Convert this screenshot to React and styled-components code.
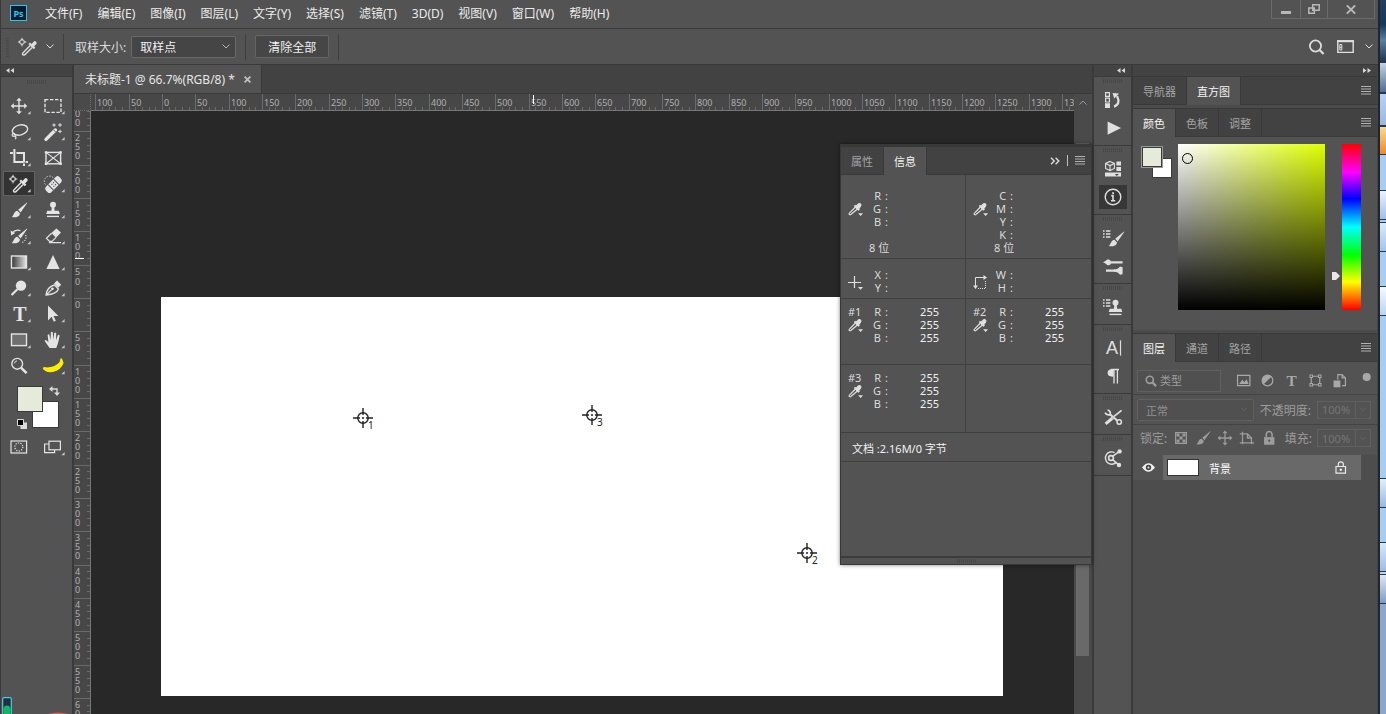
import React, { useState } from "react";
import styled, { createGlobalStyle } from "styled-components";

const GlobalStyle = createGlobalStyle`
  * {
    box-sizing: border-box;
  }

  body {
    margin: 0;
    overflow: hidden;
    background-color: #535353;
  }

  body, button, input, select {
    font-family: "Noto Sans", "Noto Sans CJK SC", sans-serif;
    font-size: 11px;
    color: #dcdcdc;
  }

  button {
    background: none;
    border: none;
    padding: 0;
  }

  svg {
    display: block;
    flex: none;
  }
`;

const Desktop = styled.div`
  display: flex;
  height: 100vh;
`;

const AppWindow = styled.div`
  flex: 1;
  min-width: 0;
  display: flex;
  flex-direction: column;
  background-color: #535353;
  border-left: 1px solid #3a3a3a;
`;

/* desktop visible at the right of the window */
const DesktopStrip = styled.div`
  width: 8px;
  display: flex;
  flex-direction: column;
  border-left: 2px solid #20262e;
  background-color: #8ba7c9;
`;

const DesktopTile = styled.div`
  height: ${(props) => props.$height}px;
  background: ${(props) => props.$background};
  border-bottom: ${(props) => (props.$framed ? "1px solid #26384f" : "none")};
  border-top: ${(props) => (props.$framed ? "1px solid #26384f" : "none")};
`;

const MenuBar = styled.header`
  height: 29px;
  flex: none;
  display: flex;
  align-items: flex-start;
  border-bottom: 1px solid #3a3a3a;
`;

const Logo = styled.div`
  width: 17px;
  height: 16px;
  margin: 5px 11px 0 9px;
  display: flex;
  align-items: center;
  justify-content: center;
  background-color: #001d33;
  border: 1px solid #2dc4e6;
  color: #2dc4e6;
  font-size: 9px;
  font-weight: bold;
`;

const MenuNav = styled.nav`
  display: flex;
  flex: 1;
`;

const MenuItem = styled.button`
  height: 26px;
  padding: 0 8px 0 7px;
  font-size: 12px;
  color: #ececec;
  white-space: nowrap;
`;

const WindowControls = styled.div`
  display: flex;
  height: 19px;
  margin-right: 3px;
  border: 1px solid #6a6a6a;
  border-top: none;
`;

const WindowButton = styled.button`
  width: ${(props) => props.$width}px;
  display: flex;
  align-items: center;
  justify-content: center;

  & + & {
    border-left: 1px solid #6a6a6a;
  }
`;

const OptionsBar = styled.div`
  height: 36px;
  flex: none;
  display: flex;
  align-items: center;
  border-bottom: 1px solid #3a3a3a;
  font-size: 12px;
  padding-left: 5px;
`;

const Grip = styled.span`
  width: ${(props) => (props.$vertical ? 3 : 19)}px;
  height: ${(props) => (props.$vertical ? 20 : 4)}px;
  background: repeating-linear-gradient(
    ${(props) => (props.$vertical ? "0deg" : "90deg")},
    #484848 0 1px,
    #535353 1px 2px
  );
`;

const Divider = styled.span`
  width: 1px;
  height: 26px;
  margin: 0 9px;
  background-color: #3f3f3f;
`;

const CurrentTool = styled.button`
  display: flex;
  align-items: center;
  gap: 8px;
  margin-left: 9px;
  color: #dcdcdc;
`;

const OptionLabel = styled.label`
  margin: 0 5px 0 2px;
`;

const SelectBox = styled.div`
  flex: ${(props) => (props.$grow ? 1 : "none")};
  width: ${(props) => props.$width};
  min-width: 0;
  height: 22px;
  display: grid;
  grid-template-columns: 1fr 18px;
  align-items: center;
  border: 1px solid ${(props) => (props.$dim ? "#606060" : "#686868")};
  border-radius: 2px;
  background-color: ${(props) => (props.$dim ? "#505050" : "#454545")};
`;

const Select = styled.select`
  grid-area: 1 / 1 / 2 / 3;
  appearance: none;
  height: 20px;
  width: 100%;
  padding: 2px 18px 0 8px;
  border: none;
  background: transparent;
  font-size: ${(props) => (props.$dim ? 11 : 12)}px;
  color: ${(props) => (props.$dim ? "#8f8f8f" : "#f0f0f0")};
  opacity: 1;
`;

const SelectArrow = styled.span`
  grid-area: 1 / 2;
  display: flex;
  justify-content: center;
  color: ${(props) => (props.$dim ? "#6c6c6c" : "#b4b4b4")};
  pointer-events: none;
`;

const ClearButton = styled.button`
  height: 23px;
  padding: 0 12px;
  font-size: 12px;
  color: #f0f0f0;
  background-color: #464646;
  border: 1px solid #646464;
  border-radius: 2px;
`;

const OptionsRight = styled.div`
  display: flex;
  align-items: center;
  gap: 11px;
  margin-left: auto;
  padding-right: 5px;
`;

const Main = styled.main`
  flex: 1;
  min-height: 0;
  display: flex;
`;

const CollapseBar = styled.div`
  height: 12px;
  flex: none;
  display: flex;
  align-items: center;
  justify-content: ${(props) => props.$justify};
  padding: 0 6px 0 5px;
  background-color: #434343;
  border-bottom: 1px solid #3a3a3a;
`;

const Toolbar = styled.aside`
  width: 73px;
  flex: none;
  display: flex;
  flex-direction: column;
  border-right: 2px solid #3a3a3a;
`;

const GripRow = styled.div`
  display: flex;
  justify-content: center;
  padding-top: 3px;
  height: 16px;
`;

const ToolGrid = styled.div`
  display: grid;
  grid-template-columns: 34px 34px;
  grid-auto-rows: 26px;
  padding-left: 1px;
`;

const ToolButton = styled.button`
  display: flex;
  align-items: center;
  justify-content: center;
  height: 25px;
  margin: 0 1px;
  color: #e4e4e4;
  background-color: ${(props) => (props.$active ? "#333333" : "transparent")};
  border: 1px solid ${(props) => (props.$active ? "#626262" : "transparent")};
`;

const ToolSwatches = styled.div`
  position: relative;
  height: 49px;
  margin-top: 6px;
`;

const Swatch = styled.button`
  position: absolute;
  left: ${(props) => props.$x}px;
  top: ${(props) => props.$y}px;
  width: ${(props) => props.$size}px;
  height: ${(props) => props.$size}px;
  background-color: ${(props) => props.$color};
  border: 1px solid #3a3a3a;
  outline: ${(props) => (props.$ring ? "1px solid #9a9a9a" : "none")};
`;

const SwatchIcon = styled.button`
  position: absolute;
  left: ${(props) => props.$x}px;
  top: ${(props) => props.$y}px;
`;

const Document = styled.section`
  position: relative;
  flex: 1;
  min-width: 0;
  display: flex;
  flex-direction: column;
`;

const DocumentTabs = styled.div`
  height: 29px;
  flex: none;
  display: flex;
  background-color: #424242;
  border-bottom: 1px solid #393939;
`;

const DocumentTab = styled.div`
  display: flex;
  align-items: center;
  gap: 9px;
  padding: 0 10px 0 11px;
  font-size: 12px;
  color: #e6e6e6;
  background-color: #535353;
  border-right: 1px solid #393939;
  white-space: nowrap;
`;

const Workspace = styled.div`
  flex: 1;
  min-height: 0;
  display: grid;
  grid-template-columns: 17px 1fr 18px;
  grid-template-rows: 17px 1fr;
  background-color: #282828;
`;

const RulerCorner = styled.div`
  background-color: #4a4a4a;
  border-right: 1px dotted #6e6e6e;
  border-bottom: 1px dotted #6e6e6e;
`;

const RulerBox = styled.div`
  overflow: hidden;
  background-color: #474747;
  border-bottom: ${(props) => (props.$vertical ? "none" : "1px solid #777777")};
  border-right: ${(props) => (props.$vertical ? "1px solid #777777" : "none")};
`;

const RulerDrawing = styled.svg`
  width: 100%;
  height: 100%;
  font-size: 9px;
  fill: #b0b0b0;
`;

const ScrollHead = styled.div`
  display: flex;
  align-items: center;
  justify-content: center;
  color: #989898;
  background-color: #4a4a4a;
`;

const ScrollTrack = styled.div`
  padding: 32px 3px 58px 2px;
  display: flex;
  background-color: #4a4a4a;
`;

const ScrollThumb = styled.div`
  flex: 1;
  background-color: #696969;
`;

const Pasteboard = styled.div`
  display: flex;
  padding: 186px 71px 18px 70px;
`;

const Artboard = styled.div`
  position: relative;
  flex: 1;
  background-color: #ffffff;
`;

const Sampler = styled.div`
  position: absolute;
  left: ${(props) => props.$x}px;
  top: ${(props) => props.$y}px;
`;

const InfoPanel = styled.section`
  position: absolute;
  top: 79px;
  right: 0;
  width: 252px;
  height: 421px;
  display: flex;
  flex-direction: column;
  background-color: #535353;
  border: 1px solid #383838;
  border-top-width: 3px;
  box-shadow: 0 0 4px rgba(0, 0, 0, 0.5);
`;

const TabBar = styled.div`
  height: 28px;
  flex: none;
  display: flex;
  background-color: #424242;
  border-bottom: 1px solid #3a3a3a;
`;

const Tab = styled.button`
  padding: 0 10px;
  height: ${(props) => (props.$active ? 28 : 27)}px;
  color: ${(props) => (props.$active ? "#f4f4f4" : "#a4a4a4")};
  background-color: ${(props) => (props.$active ? "#535353" : "#424242")};
  border-right: 1px solid #393939;
  white-space: nowrap;
`;

const TabBarEnd = styled.div`
  display: flex;
  align-items: center;
  gap: 7px;
  margin-left: auto;
  padding-right: 6px;
`;

const TabBarLine = styled.span`
  width: 1px;
  height: 11px;
  background-color: #c0c0c0;
`;

const InfoGrid = styled.div`
  display: grid;
  grid-template-columns: 1fr 1fr;
  grid-template-rows: 84px 40px 66px 68px;
`;

const InfoCell = styled.div`
  display: flex;
  padding: ${(props) => props.$top}px 0 0 7px;
  border-bottom: 1px solid #404040;

  &:nth-child(odd) {
    border-right: 1px solid #404040;
  }
`;

const InfoMark = styled.div`
  width: 17px;
  display: flex;
  flex-direction: column;
  justify-content: ${(props) => props.$justify};
  height: ${(props) => props.$height}px;
  line-height: 13px;
`;

const InfoTable = styled.table`
  border-spacing: 0;
  line-height: 13px;
  height: max-content;

  th {
    width: 16px;
    padding: 0;
    font-weight: normal;
    text-align: right;
  }

  td {
    padding: 0 0 0 4px;
    width: 8px;
  }

  td + td {
    width: 50px;
    color: #f2f2f2;
    text-align: right;
  }

  td[colspan] {
    padding-left: 4px;
    white-space: nowrap;
  }
`;

const DocumentSize = styled.div`
  height: 29px;
  padding: 2px 0 0 11px;
  display: flex;
  align-items: center;
  color: #f2f2f2;
  border-bottom: 1px solid #404040;
`;

const PanelFoot = styled.div`
  height: 8px;
  margin-top: auto;
  display: flex;
  align-items: center;
  justify-content: center;
  border-top: 2px solid #3c3c3c;
`;

const Dock = styled.aside`
  width: 41px;
  flex: none;
  display: flex;
  flex-direction: column;
  border-left: 2px solid #3a3a3a;
  border-right: 2px solid #3a3a3a;
`;

const DockGroup = styled.div`
  display: flex;
  flex-direction: column;
  align-items: center;
  padding: 2px 0 3px;
  border-bottom: 1px solid #3a3a3a;
`;

const DockGrip = styled(Grip)`
  margin-bottom: 3px;
`;

const DockButton = styled.button`
  width: 28px;
  height: 24px;
  margin: 2px 0;
  display: flex;
  align-items: center;
  justify-content: center;
  color: #e0e0e0;
  background-color: ${(props) => (props.$active ? "#373737" : "transparent")};
`;

const Panels = styled.aside`
  width: 245px;
  flex: none;
  display: flex;
  flex-direction: column;
  border-right: 1px solid #454545;
`;

const PanelGap = styled.div`
  height: 4px;
  flex: none;
  background-color: #4b4b4b;
  border-bottom: 1px solid #3a3a3a;
`;

const ColorPanel = styled.div`
  display: flex;
  height: 193px;
  padding: 7px 16px 0 9px;
`;

const ColorSwatches = styled.div`
  position: relative;
  width: 36px;
`;

const ColorField = styled.div`
  position: relative;
  flex: 1;
  height: 166px;
  background: linear-gradient(to top, #000000, transparent),
    linear-gradient(to right, #ffffff, #deff00);
`;

const ColorCursor = styled.span`
  position: absolute;
  left: 4px;
  top: 9px;
  width: 11px;
  height: 11px;
  border: 1px solid #000000;
  border-radius: 50%;
`;

const HueSlider = styled.input`
  appearance: none;
  writing-mode: vertical-lr;
  width: 29px;
  height: 166px;
  margin: 0 0 0 7px;
  background: linear-gradient(
      to bottom,
      #ff0000,
      #ff00ff 17%,
      #0000ff 33%,
      #00ffff 50%,
      #00ff00 67%,
      #ffff00 83%,
      #ff0000
    )
    right / 19px 100% no-repeat;

  &::-webkit-slider-runnable-track {
    width: 29px;
  }

  &::-webkit-slider-thumb {
    appearance: none;
    width: 8px;
    height: 8px;
    background-color: #e8e8e8;
    clip-path: polygon(0 0, 50% 0, 100% 50%, 50% 100%, 0 100%);
  }
`;

const LayersPanel = styled.div`
  flex: 1;
  display: flex;
  flex-direction: column;
  background-color: #4d4d4d;
`;

const LayerControls = styled.div`
  height: ${(props) => props.$height}px;
  display: flex;
  align-items: center;
  gap: ${(props) => props.$gap}px;
  padding: ${(props) => props.$padding};
  font-size: 12px;
  color: #9c9c9c;
  background-color: #535353;
  border-bottom: ${(props) => (props.$line ? "1px solid #434343" : "none")};
  white-space: nowrap;
`;

const FilterBox = styled.label`
  flex: 1;
  height: 22px;
  display: flex;
  align-items: center;
  gap: 3px;
  padding-left: 7px;
  border: 1px solid #606060;
  background-color: #505050;
`;

const FilterInput = styled.input`
  width: 60px;
  padding: 0;
  background: none;
  border: none;
  color: #9c9c9c;

  &::placeholder {
    color: #9c9c9c;
  }
`;

const FilterIcons = styled.div`
  display: flex;
  gap: 7px;
  padding-left: 14px;
  color: #a8a8a8;
`;

const AmountBox = styled.div`
  width: 54px;
  height: 18px;
  display: flex;
  align-items: center;
  border: 1px solid #606060;
`;

const AmountInput = styled.input`
  width: 38px;
  height: 16px;
  padding: 0 0 0 4px;
  background: none;
  border: none;
  border-right: 1px solid #606060;
  color: #757575;
`;

const AmountArrow = styled.span`
  flex: 1;
  display: flex;
  justify-content: center;
  color: #6c6c6c;
`;

const LockIcons = styled.div`
  flex: 1;
  display: flex;
  gap: 4px;
`;

const LayerRow = styled.div`
  height: 25px;
  display: flex;
`;

const EyeButton = styled.button`
  width: 30px;
  display: flex;
  align-items: center;
  justify-content: center;
  color: #f0f0f0;
  background-color: #535353;
`;

const LayerBody = styled.div`
  flex: 1;
  margin-right: 16px;
  padding: 0 14px 0 4px;
  display: flex;
  align-items: center;
  gap: 10px;
  background-color: #696969;
  color: #ffffff;
`;

const LayerThumb = styled.span`
  width: 32px;
  height: 17px;
  background-color: #ffffff;
  border: 1px solid #333333;
`;

const LayerLock = styled.span`
  margin-left: auto;
`;

/* small helper programs showing through at the bottom edge */
const CornerGadget = styled.div`
  position: absolute;
  left: 2px;
  bottom: 0;
  display: flex;
  align-items: flex-end;
  gap: 36px;
`;

const Icon = ({ size = 20, children, ...rest }) => (
  <svg
    width={size}
    height={size}
    viewBox="0 0 20 20"
    fill="none"
    stroke="currentColor"
    strokeWidth="1.4"
    {...rest}
  >
    {children}
  </svg>
);

const solid = { fill: "currentColor", stroke: "none" };

const eyedropper = (
  <>
    <path d="M13 7.6 15.6 4.8a1.7 1.7 0 0 1 2.6 2.4L15.4 10z" {...solid} />
    <path d="m11.2 6.2 5.4 5.2" strokeWidth="2.2" />
    <path d="M12.2 8.6 5.6 15.2q-2 1.8-.6 2.6t2.6-.8L14.2 10.6" />
  </>
);

const brush = (
  <>
    <path d="M18 2.4 9.2 9.8l2.4 2.6 6.6-9.4z" {...solid} />
    <path d="M8.4 10.8 11 13.4c-.4 3.4-4.6 4.4-8.4 3.6 2.4-1 2.2-6 5.8-6.2z" {...solid} />
  </>
);

const stamp = (
  <>
    <circle cx="10" cy="4.8" r="3" {...solid} />
    <path d="M8.8 7h2.4l.4 3.8h4.2l1 3.2H3.2l1-3.2h4.2z" {...solid} />
    <path d="M4 16.4h12" />
  </>
);

const moveArrows = (
  <>
    <path d="M10 3v14M3 10h14" />
    <path d="m10 1.8 2.8 3H7.2zM10 18.2l2.8-3H7.2zM1.8 10l3-2.8v5.6zM18.2 10l-3-2.8v5.6z" {...solid} />
  </>
);

const crosshairDropper = (
  <>
    <circle cx="4" cy="5" r="2.4" strokeWidth="1" />
    <path d="M4 .8v3M4 6.4v3M0 5h2.6M5.4 5h3" strokeWidth="1" />
    {eyedropper}
  </>
);

const listMarks = (
  <path d="M0 3h1.6M3 3h4.4M0 6h1.6M3 6h4.4M0 9h1.6M3 9h4.4" strokeWidth="1.3" />
);

const tools = [
  { name: "移动", icon: moveArrows },
  {
    name: "矩形选框",
    icon: <rect x="2" y="3.6" width="16" height="12.8" strokeDasharray="3.4 1.6" />,
  },
  {
    name: "套索",
    icon: (
      <>
        <ellipse cx="11" cy="8" rx="7.8" ry="5" transform="rotate(-14 11 8)" />
        <path d="M4.6 11.4c-2 .4-2 3 .2 3s1.4-3-.2-3M6 13.8q1.6 1.4.4 3.4" strokeWidth="1.2" />
      </>
    ),
  },
  {
    name: "魔棒",
    icon: (
      <>
        <path d="M3 17.4 12.4 8" strokeWidth="3.4" strokeLinecap="round" />
        <path d="m10.6 8 1.8 1.8" stroke="#535353" strokeWidth="1" />
        <path d="M11 1.4v3.4M9.3 3h3.4M17 1.2v3.6M15.2 3h3.6M17 7.8v3.4M15.3 9.4h3.4" strokeWidth="1" />
      </>
    ),
  },
  {
    name: "裁剪",
    icon: <path d="M5.4 1v13h9M1 5h3M7.4 5H15v9.6M15 15.6V18M16.6 14H19" strokeWidth="2" />,
  },
  {
    name: "图框",
    icon: (
      <>
        <rect x="3" y="4.4" width="14.6" height="11.4" />
        <path d="m3 4.4 14.6 11.4M17.6 4.4 3 15.8" strokeWidth="1.1" />
        <path d="M1.8 3.2h2.4v2.4H1.8zM16.4 3.2h2.4v2.4h-2.4zM1.8 14.6h2.4V17H1.8zM16.4 14.6h2.4V17h-2.4z" {...solid} />
      </>
    ),
  },
  { name: "颜色取样器", icon: crosshairDropper },
  {
    name: "污点修复",
    icon: (
      <>
        <path d="M2.4 10.4a5 5 0 1 1 8-6.4" strokeDasharray="1.2 1.6" strokeWidth="1" />
        <g transform="rotate(-45 10.5 10.6)">
          <rect x="1" y="6.8" width="19" height="7.6" rx="2.6" {...solid} />
          <path d="M6.6 6.8v7.6M14.4 6.8v7.6" stroke="#535353" strokeWidth="1" />
          <path d="M9 9.2h1.2M11.4 9.2h1.2M9 12h1.2M11.4 12h1.2" stroke="#535353" strokeWidth="1.2" />
        </g>
      </>
    ),
  },
  { name: "画笔", icon: brush },
  { name: "仿制图章", icon: stamp },
  {
    name: "历史记录画笔",
    icon: (
      <>
        {brush}
        <path d="M3 7.2q4-4.6 8.4-2.4" strokeWidth="1.2" />
        <path d="m1.6 4.6.6 5 4-2.6z" {...solid} />
        <path d="M16.6 9q1.8 5.6-4.6 8" strokeDasharray="1.2 1.4" strokeWidth="1.1" />
      </>
    ),
  },
  {
    name: "橡皮擦",
    icon: (
      <>
        <path d="m8.4 7 5-4.6 4.6 4-5 5.4z" {...solid} />
        <path d="m8.6 7.2-5.2 5 3.2 3.2h2.4l4-4M6 16.6h12" strokeWidth="1.2" />
      </>
    ),
  },
  {
    name: "渐变",
    icon: (
      <>
        <defs>
          <linearGradient id="toolGradient">
            <stop offset="0" stopColor="#333333" />
            <stop offset="1" stopColor="#e8e8e8" />
          </linearGradient>
        </defs>
        <rect x="2.5" y="4" width="15" height="12" fill="url(#toolGradient)" />
      </>
    ),
  },
  { name: "锐化", icon: <path d="m10 3 6.6 14H3.4z" {...solid} /> },
  {
    name: "减淡",
    icon: (
      <>
        <circle cx="12" cy="7.6" r="5.2" {...solid} />
        <path d="m2.6 17 5.8-5.8" strokeWidth="2.2" />
      </>
    ),
  },
  {
    name: "钢笔",
    icon: (
      <>
        <path d="M3 17q1-8 8.4-10l4 4Q13.8 16 3 17zM3.4 16.6l5.2-5" strokeWidth="1.3" />
        <circle cx="9.4" cy="10.8" r="1.4" {...solid} />
        <path d="m11 5.6 3-3 4.2 4.2-3 3z" {...solid} />
      </>
    ),
  },
  {
    name: "文字",
    icon: (
      <text x="11" y="16.6" textAnchor="middle" fontFamily="Liberation Serif, serif" fontWeight="bold" fontSize="20" {...solid}>
        T
      </text>
    ),
  },
  {
    name: "路径选择",
    icon: <path d="M5 1.6v14.8l3.6-3.6 2.2 5 2-1-2.2-4.8h4.8z" {...solid} />,
  },
  {
    name: "矩形",
    icon: <rect x="2.5" y="4" width="15" height="11.6" fill="#707070" />,
  },
  {
    name: "抓手",
    icon: (
      <path
        d="M6.6 18Q4 14.6 1.6 10.8c.2-1.4 1.8-1 3.8 1.4L4.6 5q1-1.6 1.8 0l1.2 5 .2-7.4q1-1.6 2 0l.4 7.2 1-6.6q1.2-1.4 2 0l-.2 7 1.8-5q1.4-1 1.8.4-1.4 8.6-3.4 12.4z"
        {...solid}
      />
    ),
  },
  {
    name: "缩放",
    icon: (
      <>
        <circle cx="8.2" cy="7.8" r="5.4" />
        <path d="M5.4 7.4A3 3 0 0 1 8 4.9" strokeWidth="1" />
        <path d="m12.2 11.8 5.4 5.4" strokeWidth="2.6" />
      </>
    ),
  },
  {
    name: "编辑工具栏",
    icon: (
      <path
        d="M-.4 12Q1 10.4 4 11.4q8.4-.2 12.6-5.4l.8-3.6h1.6l1.6 4.6Q18 14 10 16 1.6 17-.4 12z"
        fill="#ffee00"
        stroke="none"
      />
    ),
  },
];

const noFlyout = ["图框", "缩放"];

const dockGroups = [
  [
    {
      name: "历史记录",
      icon: (
        <>
          <path d="M2.6 2.6h3.8v3.8H2.6zM2.6 8.2h3.8V12H2.6z" strokeWidth="1.2" />
          <path d="M2 13.2h5V18H2z" {...solid} />
          <path d="M11 16.6q7-2.6 3-10.6" strokeWidth="2.2" />
          <path d="m9.6 3 6.4.6-4.8 5z" {...solid} />
        </>
      ),
    },
    { name: "动作", icon: <path d="M4.6 3.4 18 10 4.6 16.8z" {...solid} /> },
  ],
  [
    {
      name: "属性",
      icon: (
        <>
          <path d="m7 2.4 4.4 2v5L7 11.6 2.6 9.4v-5zM2.6 4.4 7 6.6l4.4-2.2M7 6.6v5" strokeWidth="1.1" />
          <path d="M13.4 2.4H18v4h-4.6zM13.4 8H18v4h-4.6zM2 13.6h16v4H2z" {...solid} />
          <path d="M11.8 15h4l-2 2z" fill="#444444" stroke="none" />
        </>
      ),
    },
    {
      name: "信息",
      active: true,
      icon: (
        <>
          <circle cx="10" cy="10" r="7.8" />
          <path d="M8.2 8.6H10v5M8 13.8h4.2" strokeWidth="1.6" />
          <path d="M9.2 5.2H11V7H9.2z" {...solid} />
        </>
      ),
    },
  ],
  [
    {
      name: "画笔设置",
      icon: (
        <>
          {listMarks}
          <g transform="translate(3 1)">{brush}</g>
        </>
      ),
    },
    {
      name: "画笔预设",
      icon: (
        <>
          <path d="M8 6.4h11.6M3 14.6h9" strokeWidth="2.2" />
          <path d="M0 6.2q2-.4 4.2-2.6Q8 3 8 6.4T4.2 9Q2 7 0 6.2z" {...solid} />
          <path d="M11 13.6q4 0 6-3l2.6.6v7l-2.6.6q-2-3-6-3z" {...solid} />
        </>
      ),
    },
  ],
  [
    {
      name: "仿制源",
      icon: (
        <>
          {listMarks}
          <g transform="translate(2.5 1)">{stamp}</g>
        </>
      ),
    },
  ],
  [
    {
      name: "字符",
      icon: (
        <>
          <text x="3" y="16" fontFamily="Liberation Sans, sans-serif" fontSize="18" {...solid}>
            A
          </text>
          <path d="M17.5 2.4v15.2" strokeWidth="1.2" />
        </>
      ),
    },
    {
      name: "段落",
      icon: (
        <>
          <path d="M10.6 3v7.6Q4.6 11 4.6 6.8T10.6 3z" {...solid} />
          <path d="M8 3.5h8M11 3v14.6M14.4 3v14.6" strokeWidth="1.3" />
        </>
      ),
    },
  ],
  [
    {
      name: "工具预设",
      icon: (
        <>
          <path d="m6.6 7 7.6 6.4" strokeWidth="2" />
          <circle cx="16.2" cy="15" r="2.2" strokeWidth="1.5" />
          <path d="M18.6 3.4 11 9.4" strokeWidth="1.8" />
          <path d="m9.6 11-7 5.8" strokeWidth="3" />
          <path d="M4.6 3q3.4 1 2.6 4.600Q3.600 8.600 2 5.600" strokeWidth="1.7" />
        </>
      ),
    },
  ],
  [
    {
      name: "共享",
      icon: (
        <>
          <path d="M11.6 4.6A6.2 6.2 0 1 0 13.4 14" />
          <circle cx="8" cy="10" r="2.4" strokeWidth="1.6" />
          <path d="M9.6 8.4 16 3.6M9.6 11.6l5.8 5" />
          <circle cx="16.6" cy="3.4" r="2.2" {...solid} />
          <circle cx="16" cy="17" r="2.2" {...solid} />
        </>
      ),
    },
  ],
];

const tiles = [
  { height: 62, background: "linear-gradient(#243f5d, #16385c 40%, #5a7f9f 65%, #1e3550)" },
  { height: 31, background: "linear-gradient(#c4d2e2, #4f6d90)", framed: true },
  { height: 33, background: "linear-gradient(#b8d2f2, #9ab8de)", framed: true },
  { height: 29, background: "linear-gradient(#f8dc8c, #f08828)", framed: true },
  { height: 35, background: "#a8cdf2" },
  { height: 30, background: "linear-gradient(#ecf4fc, #9cc0e8)", framed: true },
  { height: 2, background: "#a8cdf2" },
  { height: 30, background: "linear-gradient(#dceafa, #a0c4ec)", framed: true },
  { height: 34, background: "#a8cdf2" },
  { height: 30, background: "linear-gradient(#f6faff, #b8d4f2)", framed: true },
  { height: 162, background: "#a8cdf2" },
  { height: 30, background: "linear-gradient(#e4eefa, #96b8e0)", framed: true },
  { height: 34, background: "#a8cdf2" },
  { height: 30, background: "linear-gradient(#d8e8fc, #9cbce4)", framed: true },
  { height: 2, background: "#c0d4ec" },
  { height: 30, background: "linear-gradient(#dfe8f4, #7d9cc4)", framed: true },
];

const Chevron = ({ up, width = 8 }) => (
  <svg width={width} height="5" viewBox="0 0 8 5" fill="none" stroke="currentColor">
    <path d={up ? "M.5 4.5 4 1l3.5 3.5" : "M.5.5 4 4 7.5.5"} />
  </svg>
);

const DoubleArrow = ({ right }) => (
  <svg width="8" height="5" viewBox="0 0 8 5" fill="#d8d8d8">
    <path d={right ? "M0 0 3.5 2.5 0 5zM4.5 0 8 2.5 4.5 5z" : "M3.5 0 0 2.5 3.5 5zM8 0 4.5 2.5 8 5z"} />
  </svg>
);

const PanelMenu = () => (
  <svg width="10" height="9" viewBox="0 0 10 9" stroke="#b0b0b0">
    <path d="M0 .5h10M0 3h10M0 5.5h10M0 8h10" />
  </svg>
);

/* distance between labels: 50 document pixels at 66.7% zoom */
const STEP = 100 / 3;

const HorizontalRuler = ({ origin, marker }) => {
  const count = Math.floor((window.innerWidth - 420) / STEP) + 2;

  return (
    <RulerDrawing>
      {Array.from({ length: count * 5 }, (_, i) => {
        const x = Math.round(origin + ((i - 10) * STEP) / 5);
        return <path key={i} d={`M${x + 0.5} ${i % 5 ? 13 : 0}V17`} stroke="#6a6a6a" />;
      })}
      {Array.from({ length: count }, (_, i) => (
        <text key={i} x={Math.round(origin + (i - 2) * STEP) + 2} y="12">
          {Math.abs(i - 2) * 50}
        </text>
      ))}
      <path d={`M${marker} 1v9`} stroke="#ffffff" />
    </RulerDrawing>
  );
};

const VerticalRuler = ({ origin, marker }) => {
  const count = Math.floor((window.innerHeight - 80) / STEP);

  return (
    <RulerDrawing>
      {Array.from({ length: count * 5 }, (_, i) => {
        const y = Math.round(origin + ((i - 30) * STEP) / 5);
        return <path key={i} d={`M${i % 5 ? 13 : 0} ${y + 0.5}H17`} stroke="#6a6a6a" />;
      })}
      {Array.from({ length: count }, (_, i) => {
        const top = Math.round(origin + (i - 6) * STEP);
        const digits = String(Math.abs(i - 6) * 50).split("");
        const gap = digits.length === 2 ? 10 : 9;
        return digits.map((digit, n) => (
          <text key={`${i}-${n}`} x="1" y={top + 10 + n * gap}>
            {digit}
          </text>
        ));
      })}
      <path d={`M1 ${marker}h9`} stroke="#ffffff" />
    </RulerDrawing>
  );
};

const SmallDropper = () => (
  <svg width="15" height="15" viewBox="0 0 20 20" fill="none" stroke="#e0e0e0" strokeWidth="1.6">
    <g transform="translate(-2 -1)">
      <path d="M12 7.6 15.6 3.8a2 2 0 0 1 3 2.8L15.4 11z" fill="#e0e0e0" />
      <path d="m10.6 5.6 6.4 6.2" strokeWidth="2.4" />
      <path d="M11.6 8 4.6 15.2q-2 1.8-.6 2.6t2.6-.8L14.2 10.6" />
    </g>
    <path d="M13.5 15H20l-3.2 3.6z" fill="#e0e0e0" stroke="none" />
  </svg>
);

const Readout = ({ rows, depth }) => (
  <InfoTable>
    <tbody>
      {rows.map(([label, value]) => (
        <tr key={label}>
          <th scope="row">{label}</th>
          <td>:</td>
          {value && <td>{value}</td>}
        </tr>
      ))}
      {depth && rows.length === 3 && (
        <tr>
          <td colSpan="3">&nbsp;</td>
        </tr>
      )}
      {depth && (
        <tr>
          <td colSpan="3">{depth}</td>
        </tr>
      )}
    </tbody>
  </InfoTable>
);

const rgb = (value) => [
  ["R", value],
  ["G", value],
  ["B", value],
];

const SampleCell = ({ id }) => (
  <InfoCell $top={6}>
    <InfoMark $justify="flex-start" $height={40}>
      {id}
      <SmallDropper />
    </InfoMark>
    <Readout rows={rgb("255")} />
  </InfoCell>
);

const PanelTabs = ({ names, initial }) => {
  const [current, setCurrent] = useState(initial);

  return names.map((name) => (
    <Tab key={name} $active={name === current} onClick={() => setCurrent(name)}>
      {name}
    </Tab>
  ));
};

const samplers = [
  { id: 1, x: 192, y: 111 },
  { id: 3, x: 421, y: 108 },
  { id: 2, x: 636, y: 246 },
];

const menus = [
  "文件(F)",
  "编辑(E)",
  "图像(I)",
  "图层(L)",
  "文字(Y)",
  "选择(S)",
  "滤镜(T)",
  "3D(D)",
  "视图(V)",
  "窗口(W)",
  "帮助(H)",
];

const App = () => {
  const [tool, setTool] = useState("颜色取样器");
  const [hue, setHue] = useState(81);

  return (
    <Desktop>
      <GlobalStyle />
      <AppWindow>
        <MenuBar>
          <Logo>Ps</Logo>
          <MenuNav>
            {menus.map((menu) => (
              <MenuItem key={menu}>{menu}</MenuItem>
            ))}
          </MenuNav>
          <WindowControls>
            <WindowButton $width={28} aria-label="最小化">
              <svg width="10" height="9" viewBox="0 0 10 9" stroke="#b8b8b8" strokeWidth="3">
                <path d="M0 7.5h10" />
              </svg>
            </WindowButton>
            <WindowButton $width={27} aria-label="还原">
              <svg width="12" height="10" viewBox="0 0 12 10" fill="none" stroke="#b8b8b8" strokeWidth="1.5">
                <path d="M4.7.8h6.5v5.5H4.7zM.8 4h5.5v5.2H.8z" />
              </svg>
            </WindowButton>
            <WindowButton $width={47} aria-label="关闭">
              <svg width="10" height="9" viewBox="0 0 10 9" stroke="#b8b8b8" strokeWidth="2">
                <path d="m.8.4 8.4 8.2M9.2.4.8 8.6" />
              </svg>
            </WindowButton>
          </WindowControls>
        </MenuBar>

        <OptionsBar>
          <Grip $vertical />
          <CurrentTool aria-label="颜色取样器">
            <Icon>{crosshairDropper}</Icon>
            <Chevron />
          </CurrentTool>
          <Divider />
          <OptionLabel htmlFor="sample">取样大小:</OptionLabel>
          <SelectBox $width="105px">
            <Select id="sample">
              <option>取样点</option>
            </Select>
            <SelectArrow>
              <Chevron />
            </SelectArrow>
          </SelectBox>
          <Divider />
          <ClearButton>清除全部</ClearButton>
          <Divider />
          <OptionsRight>
            <Icon size={20}>
              <circle cx="9.5" cy="9" r="5.6" strokeWidth="1.8" />
              <path d="m13.6 13 4 4" strokeWidth="2.2" />
            </Icon>
            <svg width="17" height="13" viewBox="0 0 17 13" fill="none" stroke="#e0e0e0">
              <path d="M.8 1h15.4v11.5H.8z" strokeWidth="1.4" />
              <path d="M0 1.2h17" strokeWidth="2" />
              <path d="M2.8 4.5h2V10h-2zM2.8 7.2h2" />
            </svg>
            <Chevron />
          </OptionsRight>
        </OptionsBar>

        <Main>
          <Toolbar>
            <CollapseBar $justify="flex-start">
              <DoubleArrow />
            </CollapseBar>
            <GripRow>
              <Grip />
            </GripRow>
            <ToolGrid>
              {tools.map(({ name, icon }) => (
                <ToolButton
                  key={name}
                  aria-label={name}
                  $active={name === tool}
                  onClick={() => setTool(name)}
                >
                  <Icon overflow="visible">
                    {icon}
                    {!noFlyout.includes(name) && (
                      <path d="M21.6 15v3.2h-3.2z" fill="#c8c8c8" stroke="none" />
                    )}
                  </Icon>
                </ToolButton>
              ))}
            </ToolGrid>
            <ToolSwatches>
              <Swatch $x={31} $y={16} $size={27} $color="#ffffff" aria-label="背景色" />
              <Swatch $x={16} $y={1} $size={26} $color="#e6eadb" aria-label="前景色" />
              <SwatchIcon $x={48} $y={1} aria-label="切换颜色">
                <svg width="11" height="10" viewBox="0 0 11 10" fill="#dcdcdc">
                  <path d="M0 3 3.5 0v6zM8 10 5 6.5h6z" />
                  <path d="M3 3h5v4" fill="none" stroke="#dcdcdc" strokeWidth="1.4" />
                </svg>
              </SwatchIcon>
              <SwatchIcon $x={16} $y={34} aria-label="默认颜色">
                <svg width="10" height="10" viewBox="0 0 10 10">
                  <path d="M3.5 3.5H10V10H3.5z" fill="#dcdcdc" />
                  <path d="M.5.5h6v6h-6z" fill="#000000" stroke="#dcdcdc" />
                </svg>
              </SwatchIcon>
            </ToolSwatches>
            <ToolGrid>
              <ToolButton aria-label="快速蒙版">
                <Icon>
                  <rect x="2" y="4" width="15.6" height="12" strokeWidth="1.2" />
                  <circle cx="9.8" cy="10" r="4" strokeWidth="1.2" strokeDasharray="1.2 1.3" />
                </Icon>
              </ToolButton>
              <ToolButton aria-label="屏幕模式">
                <Icon overflow="visible">
                  <path d="M6 7H1.6v8.6h10V13" strokeWidth="1.2" />
                  <rect x="6" y="4.2" width="11.4" height="8.6" strokeWidth="1.2" />
                  <path d="M21.6 15v3.2h-3.2z" fill="#c8c8c8" stroke="none" />
                </Icon>
              </ToolButton>
            </ToolGrid>
          </Toolbar>

          <Document>
            <DocumentTabs>
              <DocumentTab>
                未标题-1 @ 66.7%(RGB/8) *
                <button aria-label="关闭文档">
                  <svg width="7" height="7" viewBox="0 0 7 7" stroke="#c0c0c0" strokeWidth="1.8">
                    <path d="m.6.6 5.8 5.8M6.4.6.6 6.4" />
                  </svg>
                </button>
              </DocumentTab>
            </DocumentTabs>
            <Workspace>
              <RulerCorner />
              <RulerBox>
                <HorizontalRuler origin={71} marker={442.5} />
              </RulerBox>
              <ScrollHead>
                <Chevron up />
              </ScrollHead>
              <RulerBox $vertical>
                <VerticalRuler origin={187} marker={147.5} />
              </RulerBox>
              <Pasteboard>
                <Artboard>
                  {samplers.map(({ id, x, y }) => (
                    <Sampler key={id} $x={x} $y={y}>
                      <svg width="24" height="24" viewBox="0 0 24 24" fill="none" stroke="#222222" strokeWidth="1.4">
                        <circle cx="10" cy="10" r="5.2" />
                        <path d="M10 0v7M10 13v7M0 10h7M13 10h7" />
                        <circle cx="10" cy="10" r="1" fill="#222222" stroke="none" />
                        <text x="15" y="21" fontSize="10" fill="#222222" stroke="none">
                          {id}
                        </text>
                      </svg>
                    </Sampler>
                  ))}
                </Artboard>
              </Pasteboard>
              <ScrollTrack>
                <ScrollThumb />
              </ScrollTrack>
            </Workspace>

            <InfoPanel>
              <TabBar>
                <PanelTabs names={["属性", "信息"]} initial="信息" />
                <TabBarEnd>
                  <svg width="10" height="8" viewBox="0 0 10 8" fill="none" stroke="#dcdcdc" strokeWidth="1.4">
                    <path d="m1 .8 3.2 3.2L1 7.2M5.6.8 8.8 4 5.6 7.2" />
                  </svg>
                  <TabBarLine />
                  <PanelMenu />
                </TabBarEnd>
              </TabBar>
              <InfoGrid>
                <InfoCell $top={14}>
                  <InfoMark $justify="center" $height={40}>
                    <SmallDropper />
                  </InfoMark>
                  <Readout rows={rgb("")} depth="8 位" />
                </InfoCell>
                <InfoCell $top={14}>
                  <InfoMark $justify="center" $height={40}>
                    <SmallDropper />
                  </InfoMark>
                  <Readout rows={[["C"], ["M"], ["Y"], ["K"]]} depth="8 位" />
                </InfoCell>
                <InfoCell $top={9}>
                  <InfoMark $justify="center" $height={28}>
                    <svg width="15" height="15" viewBox="0 0 15 15" stroke="#e0e0e0">
                      <path d="M6.5 1v12M0 7.5h13" strokeWidth="1.2" />
                      <path d="M10 12h5l-2.5 2.8z" fill="#e0e0e0" stroke="none" />
                    </svg>
                  </InfoMark>
                  <Readout rows={[["X"], ["Y"]]} />
                </InfoCell>
                <InfoCell $top={9}>
                  <InfoMark $justify="center" $height={28}>
                    <svg width="14" height="15" viewBox="0 0 14 15" fill="none" stroke="#e0e0e0">
                      <path d="M2.5 12V2.5H11" />
                      <path d="M0 10.5h5L2.5 14zM10.5 0v5L14 2.5z" fill="#e0e0e0" stroke="none" />
                      <path d="M12.5 6v7.5H5" strokeDasharray="1 1" />
                    </svg>
                  </InfoMark>
                  <Readout rows={[["W"], ["H"]]} />
                </InfoCell>
                <SampleCell id="#1" />
                <SampleCell id="#2" />
                <SampleCell id="#3" />
                <InfoCell $top={6} />
              </InfoGrid>
              <DocumentSize>文档 :2.16M/0 字节</DocumentSize>
              <PanelFoot>
                <Grip />
              </PanelFoot>
            </InfoPanel>
          </Document>

          <Dock>
            <CollapseBar $justify="flex-end">
              <DoubleArrow />
            </CollapseBar>
            {dockGroups.map((group) => (
              <DockGroup key={group[0].name}>
                <DockGrip />
                {group.map(({ name, icon, active }) => (
                  <DockButton key={name} aria-label={name} $active={active}>
                    <Icon overflow="visible">{icon}</Icon>
                  </DockButton>
                ))}
              </DockGroup>
            ))}
          </Dock>

          <Panels>
            <CollapseBar $justify="flex-end">
              <DoubleArrow right />
            </CollapseBar>
            <TabBar>
              <PanelTabs names={["导航器", "直方图"]} initial="直方图" />
              <TabBarEnd>
                <PanelMenu />
              </TabBarEnd>
            </TabBar>
            <PanelGap />
            <TabBar>
              <PanelTabs names={["颜色", "色板", "调整"]} initial="颜色" />
              <TabBarEnd>
                <PanelMenu />
              </TabBarEnd>
            </TabBar>
            <ColorPanel>
              <ColorSwatches>
                <Swatch $x={10} $y={14} $size={20} $color="#ffffff" aria-label="背景色" />
                <Swatch $x={0} $y={3} $size={20} $color="#e6eadb" $ring aria-label="前景色" />
              </ColorSwatches>
              <ColorField>
                <ColorCursor />
              </ColorField>
              <HueSlider
                type="range"
                aria-label="色相"
                value={hue}
                onChange={(e) => setHue(e.target.value)}
              />
            </ColorPanel>
            <PanelGap />
            <TabBar>
              <PanelTabs names={["图层", "通道", "路径"]} initial="图层" />
              <TabBarEnd>
                <PanelMenu />
              </TabBarEnd>
            </TabBar>
            <LayersPanel>
              <LayerControls $height={33} $gap={0} $padding="5px 5px 0 4px" $line>
                <FilterBox>
                  <Icon size={12} strokeWidth="2.6">
                    <circle cx="8" cy="8" r="6" />
                    <path d="m12.5 12.5 6 6" strokeWidth="4" />
                  </Icon>
                  <FilterInput aria-label="类型" placeholder="类型" />
                </FilterBox>
                <FilterIcons>
                  <Icon size={17}>
                    <path d="M3 4h14.5v12H3z" />
                    <path d="m5 14 3.5-5 2.5 3 2.5-3.5L16 14z" {...solid} />
                  </Icon>
                  <Icon size={17}>
                    <circle cx="10" cy="10" r="6.3" />
                    <path d="M5.5 14.5a6.3 6.3 0 0 1 9-9z" {...solid} />
                  </Icon>
                  <Icon size={17}>
                    <text x="10" y="16" textAnchor="middle" fontFamily="Liberation Serif, serif" fontWeight="bold" fontSize="18" {...solid}>
                      T
                    </text>
                  </Icon>
                  <Icon size={17}>
                    <path d="M5 5h10v10H5z" />
                    <path d="M3.5 3.5h3v3h-3zM13.5 3.5h3v3h-3zM3.5 13.5h3v3h-3zM13.5 13.5h3v3h-3z" fill="#535353" strokeWidth="1.2" />
                  </Icon>
                  <Icon size={17}>
                    <path d="M8 9V3h5l4 4v9h-4M13 3v4h4" />
                    <path d="M3 10h8v8H3z" {...solid} />
                  </Icon>
                  <Icon size={18}>
                    <circle cx="13" cy="5.5" r="4.5" {...solid} />
                  </Icon>
                </FilterIcons>
              </LayerControls>
              <LayerControls $height={30} $gap={6} $padding="0 6px 0 4px" $line>
                <SelectBox $grow $dim $width="auto">
                  <Select $dim disabled aria-label="混合模式">
                    <option>正常</option>
                  </Select>
                  <SelectArrow $dim>
                    <Chevron width={6} />
                  </SelectArrow>
                </SelectBox>
                <label htmlFor="opacity">不透明度:</label>
                <AmountBox>
                  <AmountInput id="opacity" defaultValue="100%" />
                  <AmountArrow>
                    <Chevron width={6} />
                  </AmountArrow>
                </AmountBox>
              </LayerControls>
              <LayerControls $height={30} $gap={5} $padding="0 6px 4px 7px">
                <span>锁定:</span>
                <LockIcons>
                  <Icon size={18}>
                    <path d="M4 4h12v12H4z" strokeWidth="1.3" />
                    <path d="M5 5h3.3v3.3H5zM11.7 5H15v3.3h-3.3zM8.3 8.3h3.4v3.4H8.3zM5 11.7h3.3V15H5zM11.7 11.7H15V15h-3.3z" {...solid} />
                  </Icon>
                  <Icon size={18}>{brush}</Icon>
                  <Icon size={18}>{moveArrows}</Icon>
                  <Icon size={18}>
                    <path d="M5 3v14M2 5.5h8.5L15 10v7M10.5 5.5V10H15M2 15.5h16" />
                  </Icon>
                  <Icon size={18}>
                    <path d="M4.5 9H16v8.5H4.5z" {...solid} />
                    <path d="M7 9V6a3.2 3.2 0 0 1 6.4 0v3" strokeWidth="1.8" />
                    <circle cx="10.2" cy="13" r="1.2" fill="#535353" stroke="none" />
                  </Icon>
                </LockIcons>
                <label htmlFor="fill">填充:</label>
                <AmountBox>
                  <AmountInput id="fill" defaultValue="100%" />
                  <AmountArrow>
                    <Chevron width={6} />
                  </AmountArrow>
                </AmountBox>
              </LayerControls>
              <LayerRow>
                <EyeButton aria-label="图层可见性">
                  <svg width="13" height="9" viewBox="0 0 13 9">
                    <path d="M0 4.5Q6.5-4 13 4.5 6.5 13 0 4.5z" fill="currentColor" />
                    <circle cx="6.5" cy="4.5" r="2.7" fill="#444444" />
                    <circle cx="6.5" cy="4.5" r="1" fill="currentColor" />
                  </svg>
                </EyeButton>
                <LayerBody>
                  <LayerThumb />
                  <span>背景</span>
                  <LayerLock>
                    <svg width="12" height="13" viewBox="0 0 12 13" fill="none" stroke="#e8e8e8">
                      <path d="M1 5.5h9.5v6.7H1z" strokeWidth="1.2" />
                      <path d="M3.3 5.5V3.3a2.5 2.5 0 0 1 5 0v2.2" strokeWidth="1.2" />
                      <circle cx="5.8" cy="8.8" r="1.2" fill="#e8e8e8" stroke="none" />
                    </svg>
                  </LayerLock>
                </LayerBody>
              </LayerRow>
            </LayersPanel>
          </Panels>
        </Main>
      </AppWindow>

      <DesktopStrip>
        {tiles.map((tile, i) => (
          <DesktopTile
            key={i}
            $height={tile.height}
            $background={tile.background}
            $framed={tile.framed}
          />
        ))}
      </DesktopStrip>

      <CornerGadget>
        <svg width="10" height="17" viewBox="0 0 10 17">
          <rect x=".7" y=".7" width="8.6" height="20" rx="1.5" fill="#262c40" stroke="#3fd0ee" strokeWidth="1.2" />
          <circle cx="5" cy="12" r="3.5" fill="#12b860" />
          <path d="M1.5 12h7v5h-7z" fill="#12b860" />
        </svg>
        <svg width="20" height="2" viewBox="0 0 20 2">
          <path d="M0 2q10-3 20 0z" fill="#e0604e" />
        </svg>
      </CornerGadget>
    </Desktop>
  );
};

export default App;
